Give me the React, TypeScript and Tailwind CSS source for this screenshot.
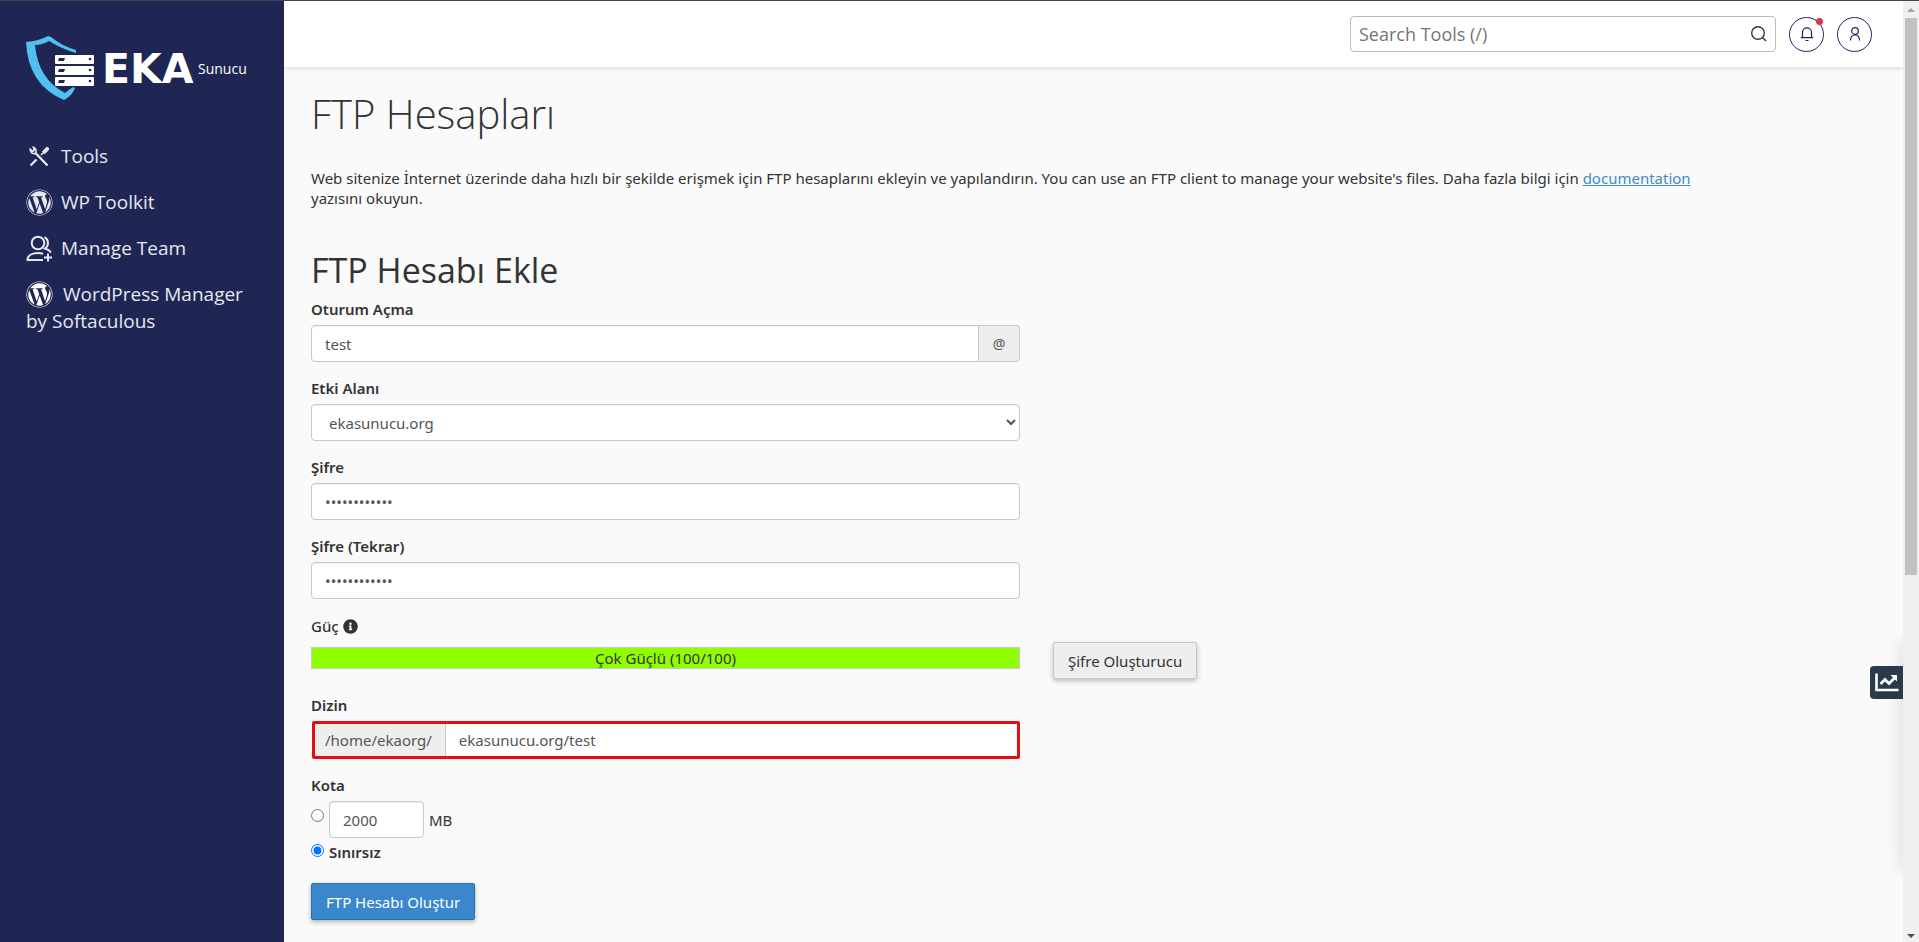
import React, { useState } from 'react'
import { FaWordpress, FaInfoCircle } from 'react-icons/fa'

const fieldStyle = "h-[37px] bg-white border border-[#c8c8c8] px-[13px] text-[15px] text-[#555] outline-none shadow-[inset_0_1px_1px_rgba(0,0,0,0.06)]"
const labelStyle = "block h-5 leading-5 mb-[6px] font-semibold text-[#333]"
const groupStyle = "h-[79px]"

const Logo = () => (
	<svg width="232" height="68" viewBox="0 0 232 68" role="img" aria-label="EKA Sunucu">
		<path d="M0 7 Q13 6 22 1 L25 2 Q36 11 50 15 L50 18 Q36 14 23 6 Q16 10 9 10 Q12 44 39 58 Q44 54 47 52 L49 53 Q46 61 38 65 Q2 50 0 7Z" fill="#4fc0f0" />
		{[20, 31, 42].map((y) => (
			<g key={y}>
				<rect x="29" y={y} width="39" height="9" rx="1" fill="#fff" />
				<path d={`M33 ${y + 3}h6l-1 3h-6z`} fill="#202654" />
				<circle cx="64" cy={y + 4} r="1.3" fill="#202654" />
			</g>
		))}
		<text x="76" y="48" fontSize="41" fontWeight="700" fontFamily="DejaVu Sans, sans-serif" fill="#fff">EKA</text>
		<text x="172" y="39" fontSize="14" fontFamily="Open Sans, sans-serif" fill="#fff">Sunucu</text>
	</svg>
)

const ToolsIcon = () => (
	<svg width="27" height="27" viewBox="0 0 27 27" className="shrink-0">
		<path d="M4.5 22.5 L10.5 16.5 M9 9.5 L21.5 22.5" stroke="currentColor" strokeWidth="2.4" fill="none" />
		<path d="M15 12 L20 7" stroke="currentColor" strokeWidth="1.6" />
		<path d="M16.5 8.5 L20.5 4.3 L22.5 5 L22.5 7 L18.5 10.8Z" fill="currentColor" stroke="currentColor" strokeWidth="1" />
		<path d="M4.2 6.2 A4 4 0 0 0 9.2 10.6 A4 4 0 0 0 7.4 4.2 L8.2 7.2 L6.8 8.4 Z" fill="none" stroke="currentColor" strokeWidth="1.6" />
	</svg>
)

const TeamIcon = () => (
	<svg width="27" height="27" viewBox="0 0 27 27" fill="none" stroke="currentColor" strokeWidth="2" className="shrink-0">
		<circle cx="12" cy="8" r="6.3" />
		<path d="M17 25 H1.5 C1.5 20.5 6 18 12 18 C14 18 15.5 18.3 17 18.8" />
		<path d="M18.5 2.2 C23 4.5 23 11 19 13.5 C22 14.5 24 16 25 17.5" />
		<path d="M22 18.5 V26.5 M18 22.5 H26" />
	</svg>
)

const SearchIcon = () => (
	<svg width="18" height="18" viewBox="0 0 18 18" fill="none" stroke="#293a4a" strokeWidth="1.4">
		<circle cx="8" cy="8" r="6.3" />
		<path d="M12.5 12.5 L16 16" />
	</svg>
)

const BellIcon = () => (
	<svg width="16" height="16" viewBox="0 0 16 16" fill="none" stroke="#202654" strokeWidth="1.2">
		<path d="M3.5 11.5 V6.5 C3.5 3.7 5.5 1.8 8 1.8 C10.5 1.8 12.5 3.7 12.5 6.5 V11.5 M1.8 11.7 H14.2 M6.5 14.5 H9.5" />
	</svg>
)

const UserIcon = () => (
	<svg width="16" height="16" viewBox="0 0 16 16" fill="none" stroke="#202654" strokeWidth="1.2">
		<circle cx="8" cy="5" r="3.3" />
		<path d="M3.5 14.5 C3.5 10.5 5 9 8 9 C11 9 12.5 10.5 12.5 14.5" />
	</svg>
)

const ChartIcon = () => (
	<svg width="24" height="19" viewBox="0 0 24 19" fill="none">
		<path d="M1.5 0.5 V17 H23.5" stroke="#fff" strokeWidth="2.6" />
		<path d="M5.5 11 L10 6.5 L14 10.5 L19.5 5" stroke="#fff" strokeWidth="2.8" />
		<path d="M15.5 2 H22 V8.5 Z" fill="#fff" />
	</svg>
)

const App = () => {
	const [login, setLogin] = useState("test")
	const [password, setPassword] = useState("abcdefghijkl")
	const [password2, setPassword2] = useState("abcdefghijkl")
	const [directory, setDirectory] = useState("ekasunucu.org/test")
	const [quota, setQuota] = useState("2000")
	const [unlimited, setUnlimited] = useState(true)

	return (
		<div className="flex min-h-screen bg-[#fafafa] border-t border-[#46464c] font-['Noto_Sans','Open_Sans',sans-serif] text-[15px] leading-5 text-[#333]">
			<aside className="w-[284px] shrink-0 bg-[#202654] text-[#e4e8f0]">
				<div className="pl-[26px] pt-[34px]">
					<Logo />
				</div>
				<nav className="px-[26px] pt-10 flex flex-col gap-[19px] font-['Open_Sans',sans-serif] text-[19px] leading-[27px]">
					<a href="#tools" className="flex items-center gap-2"><ToolsIcon />Tools</a>
					<a href="#wp-toolkit" className="flex items-center gap-2"><FaWordpress size={27} />WP Toolkit</a>
					<a href="#team" className="flex items-center gap-2"><TeamIcon />Manage Team</a>
					<a href="#softaculous"><FaWordpress size={27} className="inline-block align-top mr-[10px] text-white" />WordPress Manager by Softaculous</a>
				</nav>
			</aside>

			<div className="relative flex-1 min-w-0 overflow-hidden">
				<header className="h-[66px] bg-white shadow-[0_1px_5px_rgba(0,0,0,0.15)] flex items-center justify-end gap-[13px] pr-[31px]">
					<div className="relative w-[426px]">
						<input aria-label="Search Tools" placeholder="Search Tools (/)" className="w-full h-9 block bg-white border border-[#b8bcbc] rounded-[4px] pl-2 pr-10 font-['Open_Sans',sans-serif] text-[18px] placeholder:text-[#757575] outline-none" />
						<button aria-label="Search" className="absolute right-2 top-[9px]"><SearchIcon /></button>
					</div>
					<button aria-label="Notifications" className="relative size-[35px] rounded-full border border-[#202654] flex items-center justify-center">
						<BellIcon />
						<span className="absolute right-0 top-0 size-[7px] rounded-full bg-[#dc3545]"></span>
					</button>
					<button aria-label="Account" className="size-[35px] rounded-full border border-[#202654] flex items-center justify-center">
						<UserIcon />
					</button>
				</header>

				<main className="pl-[27px] pr-6 pt-[21px]">
					<div className="max-w-[1451px]">
						<h1 className="font-['Open_Sans',sans-serif] text-[40px] leading-[52px] font-light">FTP Hesapları</h1>
						<p className="mt-[28px] pr-6">
							Web sitenize İnternet üzerinde daha hızlı bir şekilde erişmek için FTP hesaplarını ekleyin ve yapılandırın. You can use an FTP client to manage your website's files. Daha fazla bilgi için <a href="#documentation" className="text-[#428bca] underline">documentation</a> yazısını okuyun.
						</p>
						<h2 className="mt-[41px] font-['Open_Sans',sans-serif] text-[34px] leading-[42px] font-medium">FTP Hesabı Ekle</h2>

						<form className="mt-2 pb-5 grid grid-cols-2 gap-x-[33px]" onSubmit={(e) => e.preventDefault()}>
							<div className={`${groupStyle} col-start-1`}>
								<label htmlFor="login" className={labelStyle}>Oturum Açma</label>
								<div className="flex">
									<input id="login" value={login} onChange={(e) => setLogin(e.target.value)} className={`${fieldStyle} flex-1 min-w-0 rounded-l-[4px]`} />
									<span className="h-[37px] w-[41px] flex items-center justify-center bg-[#eee] border border-l-0 border-[#c8c8c8] rounded-r-[4px] text-[14px] text-[#555]">@</span>
								</div>
							</div>

							<div className={`${groupStyle} col-start-1`}>
								<label htmlFor="domain" className={labelStyle}>Etki Alanı</label>
								<select id="domain" className={`${fieldStyle} w-full rounded-[4px]`}>
									<option>ekasunucu.org</option>
								</select>
							</div>

							<div className={`${groupStyle} col-start-1`}>
								<label htmlFor="password" className={labelStyle}>Şifre</label>
								<input id="password" type="password" value={password} onChange={(e) => setPassword(e.target.value)} className={`${fieldStyle} w-full rounded-[4px]`} />
							</div>

							<div className="h-20 col-start-1">
								<label htmlFor="password2" className={labelStyle}>Şifre (Tekrar)</label>
								<input id="password2" type="password" value={password2} onChange={(e) => setPassword2(e.target.value)} className={`${fieldStyle} w-full rounded-[4px]`} />
							</div>

							<div className={`${groupStyle} col-start-1`}>
								<div className="h-5 mb-[11px] flex items-center gap-1 font-medium">Güç <FaInfoCircle size={15} /></div>
								<div className="h-[22px] flex items-center justify-center bg-[#8fff00] border border-[#c8c8c8]">Çok Güçlü (100/100)</div>
							</div>
							<div className="col-start-2 pt-[26px]">
								<button type="button" className="h-[37px] px-[14px] bg-[#eee] border border-[#c8c8c8] rounded-[2px] shadow-[0_2px_5px_rgba(0,0,0,0.25)]">Şifre Oluşturucu</button>
							</div>

							<div className="h-20 col-start-1">
								<label htmlFor="directory" className={labelStyle}>Dizin</label>
								<div className="h-[38px] flex border-[3px] border-[#e60c12] rounded-[2px] ml-px">
									<span className="pl-[10px] pr-[13px] flex items-center bg-[#eee] border-r border-[#c8c8c8] text-[#555]">/home/ekaorg/</span>
									<input id="directory" aria-label="Dizin" value={directory} onChange={(e) => setDirectory(e.target.value)} className="flex-1 min-w-0 bg-white px-[13px] text-[#555] outline-none" />
								</div>
							</div>

							<fieldset className="col-start-1">
								<legend className="h-5 mb-[6px] font-semibold">Kota</legend>
								<div className="flex items-center gap-[5px]">
									<input type="radio" name="quota" aria-label="Kota (MB)" checked={!unlimited} onChange={() => setUnlimited(false)} className="size-[13px] mb-2" />
									<input id="quota" value={quota} onChange={(e) => setQuota(e.target.value)} className={`${fieldStyle} w-[95px] rounded-[4px]`} />
									<label htmlFor="quota">MB</label>
								</div>
								<label className="mt-1 flex items-center gap-[5px] font-semibold">
									<input type="radio" name="quota" checked={unlimited} onChange={() => setUnlimited(true)} className="size-[13px] mb-1" />
									Sınırsız
								</label>
							</fieldset>

							<div className="col-start-1 mt-[21px]">
								<button type="submit" className="h-[37px] px-[14px] bg-[#3a87cd] border border-[#2f6fa8] rounded-[2px] text-white shadow-[0_2px_5px_rgba(0,0,0,0.3)]">FTP Hesabı Oluştur</button>
							</div>
						</form>
					</div>
				</main>

				<div className="absolute left-full top-[640px] w-10 h-[230px] shadow-[0_0_20px_rgba(0,0,0,0.14)]"></div>
				<button aria-label="Statistics" className="absolute right-0 top-[665px] size-[33px] bg-[#293a4a] rounded-l-[4px] flex items-center justify-center">
					<ChartIcon />
				</button>
			</div>

			<div className="w-4 shrink-0 bg-[#f0f0f0] flex flex-col items-center justify-between">
				<div className="w-3 flex-1 flex flex-col items-center">
					<svg width="8" height="17" viewBox="0 0 8 17"><path d="M0 11 L4 7 L8 11Z" fill="#a3a3a3" /></svg>
					<div className="w-3 h-[60%] bg-[#c1c1c1]"></div>
				</div>
				<svg width="8" height="12" viewBox="0 0 8 12"><path d="M0 4 L4 8 L8 4Z" fill="#505050" /></svg>
			</div>
		</div>
	)
}

export default App
